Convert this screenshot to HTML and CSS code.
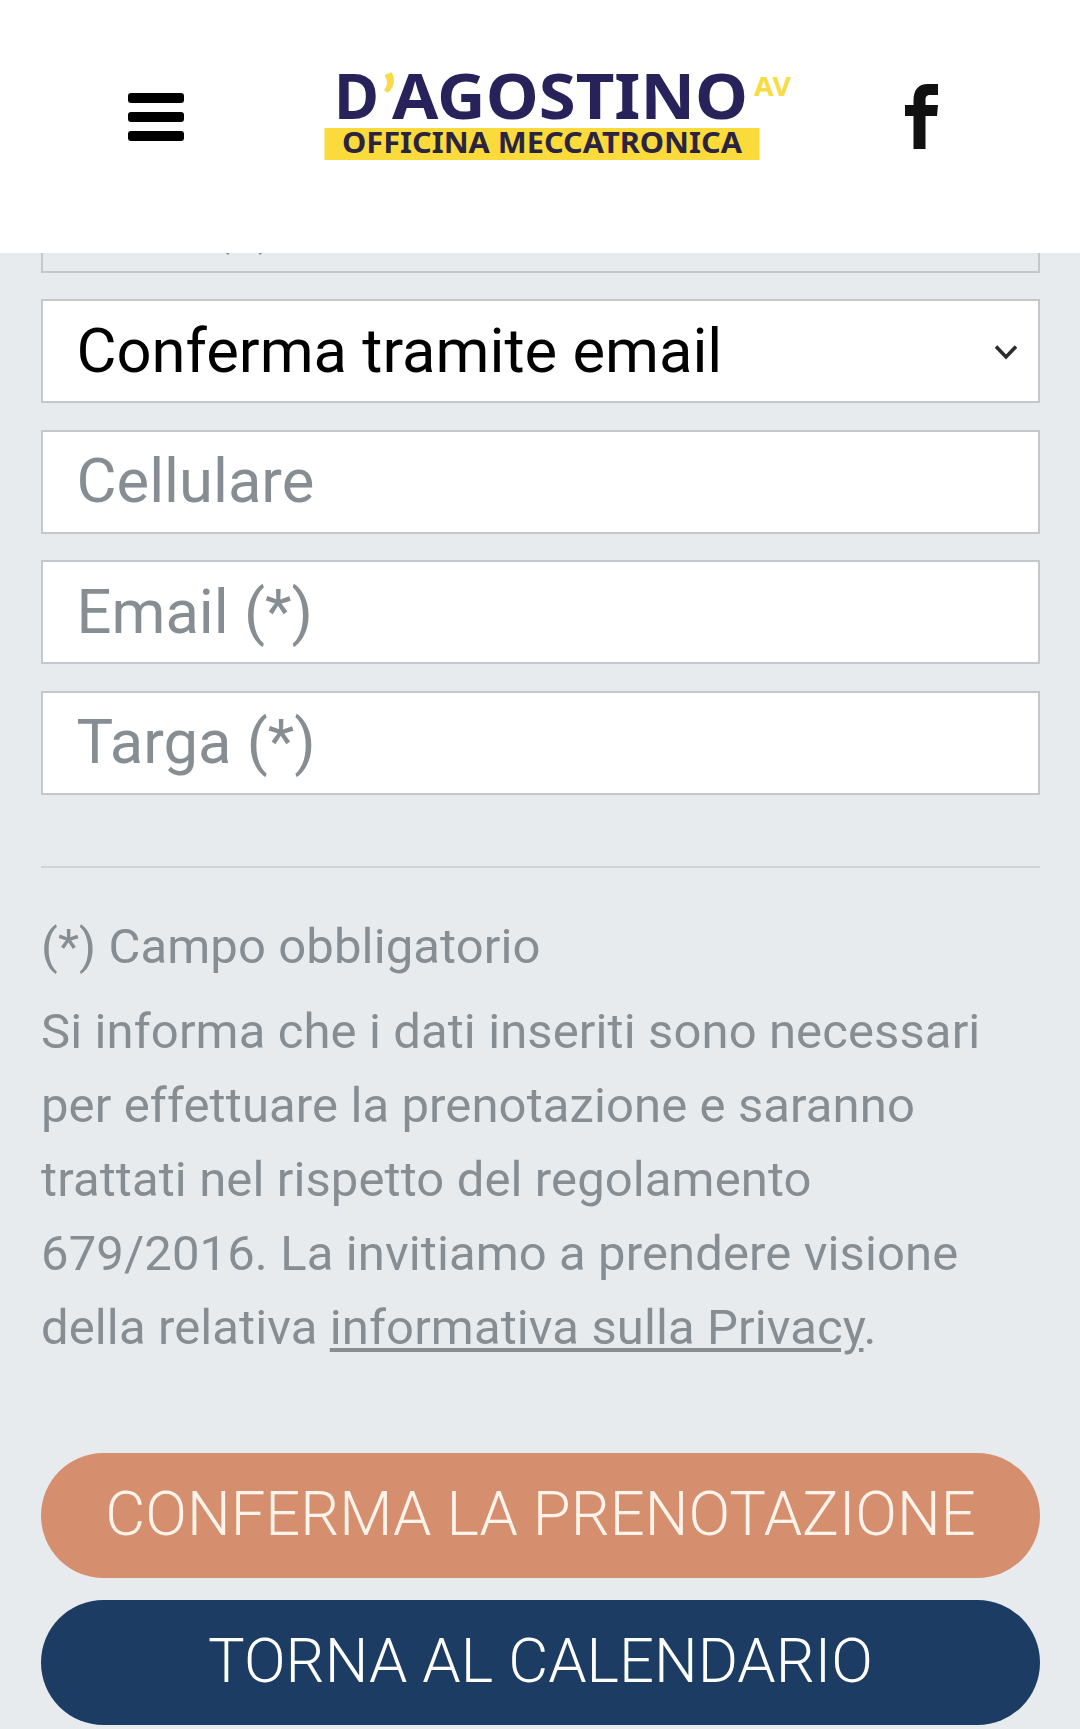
FILE: index.html
```html
<!DOCTYPE html>
<html lang="it">
<head>
    <meta charset="UTF-8">
    <meta name="viewport" content="width=device-width, initial-scale=1.0">
    <title>D'Agostino Officina Meccatronica - Prenotazione</title>
    <link rel="stylesheet" href="styles.css">
</head>
<body>
    <header class="header">
        <button class="menu-btn" type="button" aria-label="Menu">
            <span></span>
            <span></span>
            <span></span>
        </button>
        <svg class="logo" width="470" height="92" viewBox="0 0 470 92" role="img">
            <rect class="logo-bar" x="0.5" y="58" width="435" height="32"/>
            <text class="logo-name" x="10" y="49" textLength="45" lengthAdjust="spacingAndGlyphs">D</text>
            <text class="logo-name logo-accent" x="58" y="51">’</text>
            <text class="logo-name" x="68" y="49" textLength="356" lengthAdjust="spacingAndGlyphs">AGOSTINO</text>
            <text class="logo-av" x="430" y="26" textLength="37" lengthAdjust="spacingAndGlyphs">AV</text>
            <text class="logo-sub" x="18" y="82.5" textLength="400" lengthAdjust="spacingAndGlyphs">OFFICINA MECCATRONICA</text>
        </svg>
        <a class="facebook" href="#" aria-label="Facebook">
            <svg width="34" height="66" viewBox="0 0 34 66">
                <path d="M8.500 65V32H0V21h8.500V17C8.500 6 13 0 23 0h10v11h-7.500c-4 0-5 1.500-5 5v5H33l-1 11H20.500v33z"/>
            </svg>
        </a>
    </header>

    <main class="content">
        <form class="booking-form">
            <input class="field" type="text" placeholder="Data (*)" disabled>
            <div class="select-wrap">
                <select class="field">
                    <option>Conferma tramite email</option>
                </select>
                <svg class="chevron" width="22" height="16" viewBox="0 0 22 16">
                    <path d="M1 1.500L11 12L21 1.500"/>
                </svg>
            </div>
            <input class="field" type="tel" placeholder="Cellulare">
            <input class="field" type="email" placeholder="Email (*)">
            <input class="field" type="text" placeholder="Targa (*)">

            <hr class="divider">

            <p class="note required">(*) Campo obbligatorio</p>
            <p class="note">Si informa che i dati inseriti sono necessari per effettuare la prenotazione e saranno trattati nel rispetto del regolamento 679/2016. La invitiamo a prendere visione della relativa <a href="#">informativa sulla Privacy</a>.</p>

            <div class="actions">
                <button class="btn btn-confirm" type="button">CONFERMA LA PRENOTAZIONE</button>
                <button class="btn btn-back" type="button">TORNA AL CALENDARIO</button>
            </div>
        </form>
    </main>
</body>
</html>
```
FILE: styles.css
```css
* {
    box-sizing: border-box;
}
body {
    margin: 0;
    height: 1729px;
    overflow: hidden;
    font-family: Roboto, sans-serif;
    background-color: #e8ebee;
    color: #868e94;
}
.header {
    position: relative;
    z-index: 1;
    display: flex;
    justify-content: space-between;
    align-items: flex-start;
    height: 253px;
    padding: 70px 141px 0 128px;
    background-color: #fff;
}
.menu-btn {
    display: flex;
    flex-direction: column;
    gap: 9px;
    width: 56px;
    margin-top: 23px;
    padding: 0;
    border: none;
    background: none;
}
.menu-btn span {
    height: 10px;
    border-radius: 3px;
    background-color: #000;
}
.logo {
    margin-left: 29px;
    font-family: "Noto Sans", "Open Sans", sans-serif;
    font-weight: 700;
}
.logo-bar {
    fill: #fbdb3b;
}
.logo-name {
    font-size: 63px;
    fill: #27235a;
}
.logo-accent {
    font-family: Lato, sans-serif;
    font-weight: 900;
}
.logo-accent,
.logo-av {
    fill: #f9dc45;
}
.logo-av {
    font-size: 26px;
}
.logo-sub {
    font-size: 29px;
    fill: #2b2440;
}
.facebook {
    display: flex;
    margin-top: 14px;
    fill: #111;
}
.content {
    padding: 0 40px 0 41px;
}
.booking-form {
    display: flex;
    flex-direction: column;
    gap: 26.5px;
    margin-top: -84.500px;
}
.field {
    display: block;
    width: 100%;
    height: 104px;
    padding: 0 33.500px 1px;
    border: 2px solid #c4c8cc;
    border-radius: 0;
    background-color: #fff;
    font-family: inherit;
    font-size: 61.500px;
    color: #000;
    appearance: none;
}
.field::placeholder {
    color: #868e94;
    opacity: 1;
}
.field:disabled {
    padding-left: 24px;
    background-color: #e8ebee;
}
.select-wrap {
    position: relative;
}
.chevron {
    position: absolute;
    top: 46px;
    right: 23px;
    fill: none;
    stroke: #2b2b2b;
    stroke-width: 3.6;
}
.divider {
    width: 100%;
    margin: 44.500px 0 0;
    border: none;
    border-top: 2px solid #d0d4d8;
}
.note {
    margin: 0;
    font-size: 49px;
    line-height: 74px;
    letter-spacing: 0.11px;
}
.required {
    margin: 16px 0 -16px;
}
.note a {
    color: inherit;
    text-decoration-thickness: 4px;
    text-underline-offset: 4px;
}
.actions {
    display: flex;
    flex-direction: column;
    gap: 22px;
    margin-top: 62px;
}
.btn {
    height: 125px;
    padding: 0 0 4px;
    border: none;
    border-radius: 63px;
    font-family: inherit;
    font-size: 61.500px;
    font-weight: 300;
    color: #fff;
}
.btn-confirm {
    background-color: #d58f6e;
    color: #fff3ea;
}
.btn-back {
    background-color: #1c3c63;
}
```
